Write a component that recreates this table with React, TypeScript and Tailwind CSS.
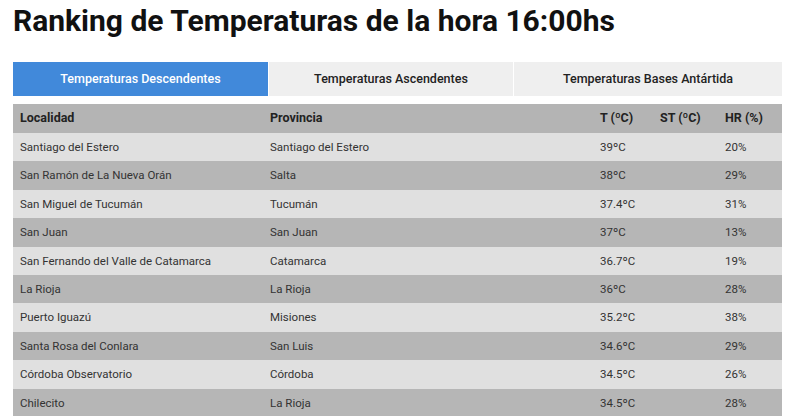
import React from "react";

const rows: [string, string, string, string, string][] = [
  ["Santiago del Estero", "Santiago del Estero", "39ºC", "", "20%"],
  ["San Ramón de La Nueva Orán", "Salta", "38ºC", "", "29%"],
  ["San Miguel de Tucumán", "Tucumán", "37.4ºC", "", "31%"],
  ["San Juan", "San Juan", "37ºC", "", "13%"],
  ["San Fernando del Valle de Catamarca", "Catamarca", "36.7ºC", "", "19%"],
  ["La Rioja", "La Rioja", "36ºC", "", "28%"],
  ["Puerto Iguazú", "Misiones", "35.2ºC", "", "38%"],
  ["Santa Rosa del Conlara", "San Luis", "34.6ºC", "", "29%"],
  ["Córdoba Observatorio", "Córdoba", "34.5ºC", "", "26%"],
  ["Chilecito", "La Rioja", "34.5ºC", "", "28%"],
];

export default function App() {
  return (
    <div
      className="w-[800px] h-[416px] overflow-hidden bg-white text-[#333]"
      style={{ fontFamily: "Roboto, 'Liberation Sans', sans-serif" }}
    >
      <h1 className="pl-[13px] pt-[3px] text-[30px] leading-[36px] font-bold text-[#111]">
        Ranking de Temperaturas de la hora 16:00hs
      </h1>
      <div className="ml-[13px] mt-[23px] w-[769px] flex h-[34px] text-[12.5px] font-medium">
        <div className="w-[255px] bg-[#4189da] text-white flex items-center justify-center">
          Temperaturas Descendentes
        </div>
        <div className="w-[244px] ml-px bg-[#efefef] text-[#222] flex items-center justify-center">
          Temperaturas Ascendentes
        </div>
        <div className="flex-1 ml-px bg-[#efefef] text-[#222] flex items-center justify-center">
          Temperaturas Bases Antártida
        </div>
      </div>
      <div className="ml-[13px] mt-[8px] w-[769px] text-[11.5px]">
        <div className="flex h-[29px] items-center bg-[#b4b4b4] text-[12.5px] font-bold text-[#222]">
          <div className="w-[257px] pl-[7px]">Localidad</div>
          <div className="w-[330px]">Provincia</div>
          <div className="w-[60px]">T (ºC)</div>
          <div className="w-[65px]">ST (ºC)</div>
          <div className="flex-1">HR (%)</div>
        </div>
        {rows.map((r, i) => (
          <div
            key={i}
            className={
              "flex h-[28.4px] items-center pt-px " +
              (i % 2 === 0 ? "bg-[#e0e0e0]" : "bg-[#b6b6b6]")
            }
          >
            <div className="w-[257px] pl-[7px]">{r[0]}</div>
            <div className="w-[330px]">{r[1]}</div>
            <div className="w-[60px]">{r[2]}</div>
            <div className="w-[65px]">{r[3]}</div>
            <div className="flex-1">{r[4]}</div>
          </div>
        ))}
      </div>
    </div>
  );
}
